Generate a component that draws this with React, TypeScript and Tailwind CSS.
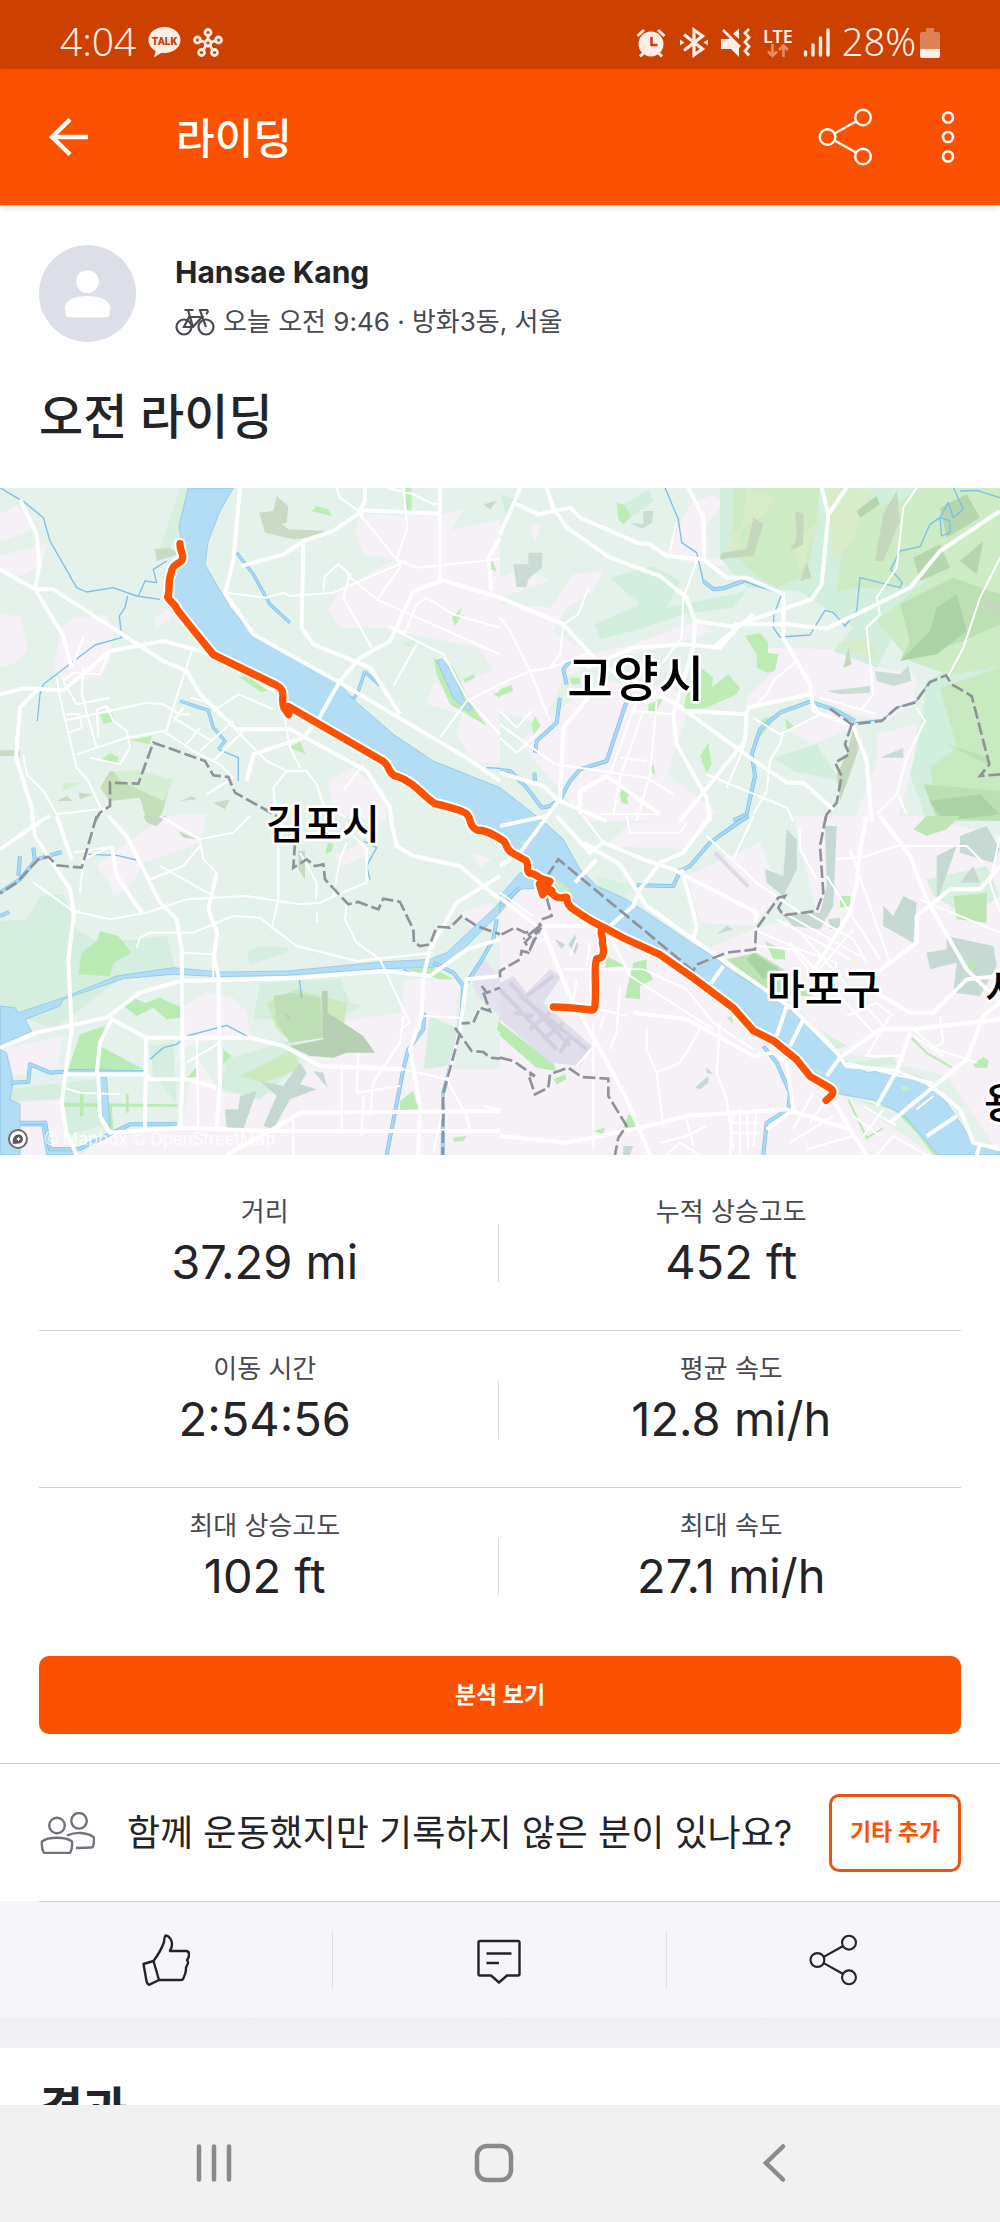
import React from 'react';

interface Stat {
    label: string;
    value: string;
}

const STATS: Stat[][] = [
    [
        { label: '거리', value: '37.29 mi' },
        { label: '누적 상승고도', value: '452 ft' },
    ],
    [
        { label: '이동 시간', value: '2:54:56' },
        { label: '평균 속도', value: '12.8 mi/h' },
    ],
    [
        { label: '최대 상승고도', value: '102 ft' },
        { label: '최대 속도', value: '27.1 mi/h' },
    ],
];

// The map is split in four quadrants, each with its own local coordinates.
const NW = 'translate(0 -21)';
const NE = 'translate(1500 -21)';
const SW = 'translate(0 984)';
const SE = 'translate(1500 984)';

interface Shape {
    at: string;
    fill: string;
    d: string;
}

const LAND: Shape[] = [
    // urban
    { at: NW, fill: '#f6f1f6', d: 'M0 100L50 75 90 100 90 150 0 180zM0 225L140 188 125 255 60 285 0 270zM0 400L60 405 85 500 50 545 0 560zM185 440L225 410 320 402 340 450 330 540 300 590 190 600 160 560zM465 410L520 370 540 385 490 430 465 440z' },
    { at: NW, fill: '#f6f1f6', d: 'M1080 100L1310 105 1390 85 1350 150 1500 115 1500 600 1440 500 1230 460 1150 440 1020 440 985 385 1020 330 1130 265 1190 235 1090 220 1065 150zM1300 610L1400 600 1500 560 1500 850 1420 840 1370 760 1385 700 1280 670zM985 900L1060 860 1150 930 1160 1020 1000 1000z' },
    { at: NW, fill: '#f6f1f6', d: 'M530 1000L620 1000 600 1020 520 1020z' },
    { at: NE, fill: '#f6f1f6', d: 'M0 290L70 260 150 300 0 350zM0 370L150 380 220 280 310 270 280 330 200 380 160 450 270 520 400 490 590 420 640 450 480 500 300 540 190 590 130 730 0 690zM60 780L210 660 300 600 520 620 560 700 500 880 650 990 620 1020 260 1020 130 870zM570 70L640 40 665 70 620 130 620 230 690 240 670 255 540 240 500 220zM90 140L125 125 105 180z' },
    { at: NE, fill: '#f6f1f6', d: 'M800 500L1000 505 1140 560 1250 580 1240 660 1160 720 1060 700 930 640 740 690 740 650 820 570zM870 750L990 690 1060 740 940 790zM1130 760L1250 730 1240 860 1190 1020 1060 1020 1130 850z' },
    { at: SW, fill: '#f6f1f6', d: 'M410 60L500 0 620 0 600 80 430 140 400 200 340 245 330 205 290 150zM1410 110L1475 130 1440 155zM1000 120L1090 80 1110 110 1030 150zM1380 290L1470 260 1500 300 1420 340z' },
    { at: SW, fill: '#f6f1f6', d: 'M555 570L620 530 700 545 740 590 750 665 640 670 560 690 520 760 540 680zM15 700L190 660 170 755 40 780 30 740zM60 860L190 850 220 1017 70 1017 50 910z' },
    { at: SW, fill: '#f6f1f6', d: 'M1000 620L1200 590 1215 490 1380 490 1350 760 1500 760 1500 1017 240 1017 340 950 540 940 590 720 660 830 870 840 920 740z' },
    { at: SE, fill: '#f6f1f6', d: 'M0 240L120 200 330 320 600 480 760 640 900 760 1000 830 1050 850 1300 1017 0 1017z' },
    { at: SE, fill: '#f6f1f6', d: 'M320 90L390 20 640 10 560 100zM560 180L780 80 840 230 760 330 600 320zM880 0L1260 0 1500 60 1500 1017 1340 780 1180 740 1000 700 880 560 620 400 760 340 950 290z' },
    // pale green belts
    { at: NW, fill: '#d7efdf', d: 'M540 20L565 20 540 150 490 230 480 200zM1200 490L1250 470 1240 500z' },
    { at: NE, fill: '#d2eedd', d: 'M370 70L450 25 460 60 370 125zM330 290L460 255 540 300 500 380 740 330 700 380 550 400 400 450 300 475 285 430 420 370zM0 40L60 60 20 110zM820 830L950 790 1020 900 880 870z' },
    { at: NE, fill: '#d2eedd', d: 'M660 20L1500 20 1500 130 1250 330 1130 560 1000 510 1060 440 900 330 740 320 660 230z' },
    { at: NE, fill: '#d2eedd', d: 'M1280 600L1500 480 1500 1020 1280 1020 1230 880 1260 760z' },
    { at: SW, fill: '#d6eedf', d: 'M0 315L80 310 120 240 190 235 230 340 300 380 500 360 530 470 360 490 160 640 60 600 0 570z' },
    { at: SW, fill: '#d6eedf', d: 'M740 410L780 390 865 395 860 410 750 445zM780 500L1020 490 1050 560 1085 570 1010 610 760 610zM680 730L880 670 900 740 780 850 660 820zM450 690L520 680 530 860 460 780zM190 800L290 790 300 930 200 960zM30 820L180 800 190 850 30 855zM1290 600L1380 640 1340 750 1270 760z' },
    { at: SE, fill: '#d8f0e0', d: 'M290 180L400 210 360 250 300 220zM960 640L1040 690 1010 700zM1060 740L1180 720 1190 745 1080 755zM1280 190L1460 150 1500 240 1400 300 1300 240z' },
    // hills
    { at: NE, fill: '#cdebc4', d: 'M700 20L960 20 950 120 920 280 830 320 740 260 700 200zM1040 100L1200 60 1260 20 1500 20 1500 560 1340 580 1230 540 1130 420 1290 290 1180 320 1070 320 1010 330z' },
    { at: NE, fill: '#c9eac1', d: 'M1320 620L1500 560 1500 1020 1320 1020 1290 860 1370 800z' },
    { at: NE, fill: '#d9ecca', d: 'M740 20L830 50 780 110 690 160 690 230 720 190zM880 180L960 120 900 270zM1010 490L1100 470 1140 540 1060 510zM980 20L1120 30 1060 180 1000 240z' },
    { at: NE, fill: '#bcdfb4', d: 'M1200 370L1360 290 1500 340 1500 430 1390 480 1200 540 1230 480zM1270 910L1500 930 1500 1020 1310 1010zM1340 790L1460 850 1470 830z' },
    { at: NE, fill: '#abd3a6', d: 'M1310 380L1370 340 1400 450 1310 520 1200 540 1290 450zM1290 960L1440 940 1500 1000 1330 1020z' },
    { at: NE, fill: '#b5d6ae', d: 'M1240 230L1320 190 1350 260 1260 300zM1320 80L1400 40 1440 110 1340 170zM1380 240L1450 180 1430 280zM1070 90L1130 45 1140 70 1080 110z' },
    { at: NE, fill: '#c5d8bd', d: 'M760 110L790 130 760 225 660 235 665 215 740 205zM885 90L910 100 910 190 870 210 890 170zM1150 100L1190 30 1200 120 1150 240 1125 240zM900 300L920 245 935 290zM1030 560L1045 500 1055 550zM1450 350L1500 370 1500 400 1450 380zM1060 740L1080 790 1050 880 1020 960 1010 880 1040 820z' },
    { at: NE, fill: '#cbdcd4', d: 'M40 250L85 250 85 215 128 215 125 260 85 295 80 318 50 318zM390 125L430 130 430 90 460 90 455 125 425 143zM980 630L1110 615 1110 635 1020 640zM1125 570L1200 580 1225 555 1235 600 1180 615 1130 600zM1140 830L1210 800 1210 830z' },
    { at: NW, fill: '#c9dac5', d: 'M778 95L820 90 830 45 865 75 860 125 845 128 865 145 985 150 980 165 880 175 795 155zM465 205L510 200 540 220 470 240zM1450 70L1490 60 1470 85zM0 808L60 808 60 825 0 825zM170 960L200 945 220 960zM235 935L280 940 240 955zM540 960L575 945 590 955zM640 965L690 955 675 985z' },
    { at: NW, fill: '#c4dfb9', d: 'M300 920L330 870 430 890 515 895 480 1020 440 1020 420 950 330 960z' },
    { at: NW, fill: '#d4efd4', d: 'M190 905L245 905 190 930zM340 870L420 868 520 900 490 960 360 900z' },
    { at: SW, fill: '#cde9be', d: 'M800 560L890 520 1040 560 1030 640 880 680 830 640zM720 780L880 700 900 760 790 800z' },
    { at: SW, fill: '#bfdfb7', d: 'M820 540L880 530 960 545 972 665 870 680 830 620z' },
    { at: SW, fill: '#b7d0b3', d: 'M965 525L983 525 983 590 1090 660 1125 710 1040 710 1000 725 930 720 870 690 970 670zM850 590L870 600 870 615z' },
    { at: SW, fill: '#c6d8d2', d: 'M675 880L715 880 720 840 770 825 730 940 680 940zM780 795L850 810 900 740 920 770 900 805 950 820 870 850 820 940 790 930 830 840zM940 765L970 770 982 815z' },
    { at: SW, fill: '#c6d9c5', d: 'M430 0L500 0 470 30 440 20zM535 45L590 70 550 65zM895 105L915 105 915 190 895 160z' },
    { at: SE, fill: '#c6d9d2', d: 'M860 40L890 70 890 160 850 240 800 200 795 160 850 180zM975 30L1010 30 1000 270 960 340 880 330 840 290 960 290 980 210zM1150 270L1180 300 1210 240 1250 260 1240 380 1150 330zM1280 410L1340 400 1340 360 1480 390 1490 450 1440 540 1360 530 1370 440 1290 460zM1380 60L1460 30 1500 100 1480 140 1380 110zM1310 120L1370 90 1310 260zM1380 200L1420 150 1440 200zM650 355L680 330 700 340zM985 310L1020 305 1020 335 990 340zM165 370L195 385 185 400zM205 385L225 355 235 390 225 415zM585 815L625 780 625 800 600 820zM620 755L640 775 620 770zM370 990L400 990 390 1017 370 1017z' },
    { at: SE, fill: '#bfe5b5', d: 'M1360 240L1460 230 1460 320 1370 310zM1240 40L1280 0 1380 0 1340 40 1280 60z' },
    { at: SE, fill: '#bde3b4', d: 'M680 430L770 410 850 460 940 540 830 540 740 480z' },
    { at: SE, fill: '#a7d4a1', d: 'M760 410L850 470 790 490 740 430z' },
    // parks
    { at: NW, fill: '#bdecb4', d: 'M935 90L950 75 985 85 995 105zM1218 20L1235 20 1235 90 1218 90zM1468 265L1475 235 1490 270zM300 700L335 695 345 720 310 730zM390 778L455 765 450 790zM305 835L330 815 357 830 350 845zM868 800L900 782 917 820zM715 585L750 590 805 630 780 632zM1355 410L1385 380 1380 400 1395 405 1380 410 1365 435zM1390 595L1420 580 1425 590 1395 605zM1300 530L1360 560 1420 680 1460 735 1350 670 1310 580zM1480 640L1500 630 1500 650z' },
    { at: NE, fill: '#bdecb4', d: 'M350 65L370 70 395 105 370 130 355 115zM735 465L780 455 805 485 803 515 835 520 825 570 800 575 770 560 770 520zM560 640L590 550 640 590 635 620 685 580 720 620 710 640 620 680 550 685zM445 670L490 650 470 690 445 690zM600 825L625 785 635 850 620 875zM450 865L460 850 467 885zM360 940L370 915 400 935 380 950 385 970 365 965zM0 625L35 612 40 630 0 645zM785 715L835 700 780 770zM855 710L885 740 860 745zM95 730L105 705 122 735 100 760zM210 590L240 590 240 610 215 610z' },
    { at: SW, fill: '#b9ebb2', d: 'M245 410L290 375 300 345 355 360 395 410 340 440 330 480 235 475 240 440zM372 570L400 545 435 560 480 545 545 575 543 605 500 610 460 575 410 600zM240 655L315 630 300 690 430 760 205 760zM190 860L530 865 535 872 190 872zM670 700L695 720 670 745zM560 785L592 750 590 782zM1200 855L1240 825 1255 880 1200 885zM1360 965L1400 960 1390 975 1362 977zM975 115L985 80 1000 85 995 105zM318 870L335 870 340 940 325 940zM1490 640L1500 600 1500 650zM1220 460L1300 457 1360 490 1320 490zM240 830L250 830 250 900 240 900zM378 835L386 835 386 890 378 890z' },
    { at: SE, fill: '#b9ebb2', d: 'M0 620L130 720 160 740 170 765 110 755 0 660zM400 440L440 430 440 460 460 490 420 510 420 550 375 545zM320 420L375 450 315 455zM795 375L855 405 855 430 820 430zM670 440L740 470 830 560 790 540zM165 200L190 215 190 235zM680 605L695 600 700 625zM1020 240L1050 240 1055 270 1020 275zM160 790L195 775 200 790 170 805zM385 895L410 910 415 935 370 935zM280 945L315 935 310 955zM1420 745L1450 722 1467 735 1460 755 1425 755zM1395 430L1430 445 1420 465zM1050 850L1180 880 1250 950 1300 1017 1330 1017 1200 880z' },
    // airport
    { at: SE, fill: '#e0deea', d: 'M0 500L40 480 80 530 150 460 185 480 130 560 275 690 240 750 150 740 0 610z' },
    { at: SW, fill: '#e4e2ee', d: 'M1410 480L1450 430 1500 480 1500 600 1430 540z' },
];

const RUNWAYS = 'M0 520L170 700M30 500L210 690M60 540L260 700M80 540L160 480M40 590L100 600M130 670L190 620M90 640L150 590M180 710L210 660';

const HAN_RIVER =
    'M565 0L538 110 545 200 505 240 500 320 540 380 640 500 850 590 860 670 1150 830 1180 870 1300 950 1400 990 1500 1044 1520 1074 1580 1100 1620 1164 1700 1224 1820 1314 1980 1384 2090 1464 2220 1574 2260 1624 2360 1664 2440 1754 2500 1814 2550 1824 2620 1836 2710 1880 2815 2001 3000 2001 3000 1984 2920 1964 2880 1904 2840 1844 2770 1774 2690 1744 2600 1754 2510 1704 2420 1604 2320 1524 2200 1454 2140 1404 2080 1369 2000 1314 1880 1234 1790 1194 1740 1144 1690 1054 1630 1000 1500 899 1400 859 1300 819 1180 739 1065 639 1020 589 880 509 760 439 690 359 615 229 625 159 660 69 700 0z';

const WATER: Shape[] = [
    { at: NW, fill: '#b3ddf4', d: 'M1310 540L1325 533 1370 590 1390 655 1418 680 1405 690 1360 650z' },
    { at: SW, fill: '#b3ddf4', d: 'M0 570L45 575 55 590 190 545 350 480 520 455 660 468 860 465 1140 438 1290 430 1340 410 1500 260 1500 290 1360 430 1300 455 1140 458 860 478 660 482 520 475 370 488 190 550 180 570 75 610 95 645 0 690zM0 700L20 710 40 800 30 850 60 865 60 920 140 915 150 1000 230 1005 220 1017 140 1017 125 930 60 930 60 1017 0 1017zM300 785L320 785 330 930 315 930 300 870z' },
    { at: SE, fill: '#b3ddf4', d: 'M0 240L60 170 130 180 130 215 60 220 0 290z' },
];

const CANALS: { at: string; w: number; d: string }[] = [
    { at: NW, w: 10, d: 'M710 215L760 280 810 370 870 425M540 660L625 688 640 740 675 780 655 805M1095 570L1075 630 1060 655M1095 572L1138 612M1020 630L1060 655' },
    { at: NW, w: 4, d: 'M0 20L75 65 130 110 150 180 230 320 260 333 340 320 410 345 480 355M500 240L460 265 470 305 435 300 415 345M383 345L375 380 358 405 365 470 285 492 130 610 120 640 112 720M655 805L715 830 715 900M1460 860L1500 862' },
    { at: NE, w: 12, d: 'M210 540L190 565 200 610M180 650L170 725 110 780 105 815M380 660L320 840 240 865 210 900 180 955 150 975 125 980 80 920 30 870 0 868M610 300L640 325 670 322 730 300M700 1018L740 1000 765 885 755 820 780 745 840 695 930 662 1000 685 1065 720M103 875L105 900' },
    { at: NE, w: 4, d: 'M495 20L535 115 545 185 590 215 610 300M730 300L845 340 822 400 820 440 840 468 930 462 975 388 1000 395 1035 435 1070 390 1080 290 1200 320 1207 305 1172 265 1200 210 1260 197 1290 130 1320 110 1345 65 1360 110 1390 85 1360 20M1320 110L1325 165 1350 155 1350 120 1320 110M1065 725L1150 715 1190 680 1250 660 1290 600M1380 30L1430 28 1500 50' },
    { at: SW, w: 12, d: 'M0 230L60 190 110 130 185 108M60 120L55 180M100 95L105 140M0 300L28 288M1300 440L1360 470 1390 510 1385 600 1375 660 1330 830 1328 1017M1400 500L1440 440 1480 370 1490 310M30 800L85 798 90 745 150 770 220 765 430 768M60 920L135 920 150 1000 235 1000 390 925 530 925M1160 1017L1210 760 1225 700 1270 640 1272 590' },
    { at: SW, w: 4, d: 'M265 115L350 118 410 132M450 730L490 695 530 685 560 660 680 628 750 665M898 490L905 545M1090 75L1130 95 1100 150 1110 190M1210 460L1270 485' },
    { at: SE, w: 12, d: 'M745 0L700 30 630 80 570 150 540 165 520 210 410 208M790 690L830 740 870 830 865 880 800 920 790 1017M0 270L60 215' },
];

const MAJOR_ROADS: { at: string; d: string }[] = [
    { at: NW, d: 'M720 20L700 240 675 335 760 460 1020 605 1400 830 1500 900M0 265L105 325 160 325 490 540 560 570 600 640 710 745 870 745 1100 870 1170 980 1175 1020M105 325L190 465 215 560M0 640L70 622 190 628 330 510 490 480 640 520 860 650M60 55L110 160 118 250 105 325M110 628L60 680 48 830 95 980 100 1020M725 255L850 220 910 180 1000 150 1090 88 1320 98M1095 20L1095 60 1080 90M910 180L905 440 940 490 1110 560 1200 700M1320 20L1320 300 1240 330 1170 480 1080 530 1020 600 955 715 910 770 760 820 740 900M1240 330L1330 298 1500 350M1500 170L1465 230 1475 330' },
    { at: NE, d: 'M140 20L160 80 200 140 330 230 480 285 560 350 585 420 580 500 520 700 530 790 620 950 630 1020M60 20L40 70 0 160M40 65L115 100 210 80 240 110 410 185 450 190 500 225 610 235 680 290 740 290 850 340 850 470 930 610 940 690 1060 735 1100 840 1115 1020M565 20L610 110 612 235M0 350L190 430 300 550 430 620 530 670 750 830 860 905 910 905 1000 985M585 420L700 437 860 380 935 355 965 310 985 100 965 20M1040 20L985 100M640 500L760 400M700 430L860 430 980 443 1080 395 1230 320 1320 210 1500 90M260 560L400 500 550 490 660 500 720 430M560 690L740 700M740 680L930 640M740 690L735 780 540 1020M265 650L190 740 180 960M0 875L130 915 175 960 130 1020M180 960L320 1020M240 1000L240 930 320 885 480 1000' },
    { at: SW, d: 'M95 0L105 60 210 220 222 290 205 430 215 640 185 860 200 950 230 1017M150 0L130 10 0 100M170 0L215 130M325 0L380 60 480 260 530 310 545 400 548 780 540 940M335 90L350 180 425 290M650 170L625 280 652 350 642 420 655 480 660 800 650 940M0 695L110 650 320 605 420 530 540 495 900 485 1150 465 1290 480 1400 400 1500 370M1290 400L1270 480 1265 600 1230 700 1260 870 1255 1017M1290 400L1370 260 1500 180M1170 0L1190 90 1240 120 1380 150 1450 210 1500 250M190 775L440 775 450 790 560 790 650 815M438 665L435 940M438 665L750 665 850 690 960 750 1210 760M290 775L300 680 335 610 440 665M295 780L300 900 330 950 540 935 800 945 1500 945M680 1017L800 950 900 890 1500 885M1500 480L1400 490 1380 640 1340 800' },
    { at: SE, d: 'M0 30L140 0M0 150L60 110 135 10M0 245L110 330 300 330M130 340L200 520 300 700 380 850 450 1017M170 0L270 110 310 80 430 130 520 160 770 290 765 320M225 200L290 130M330 330L400 270 420 220 480 140 550 110 630 0M250 80L360 145 440 270 650 420 880 580 1010 710 1040 750 1190 765 1280 800 1380 880 1420 980 1500 1000M545 160L570 250 590 330 580 370M400 590L560 610 760 720 820 710 860 740 880 880 800 940M0 960L200 980 400 940 560 900 860 880 1050 940M830 660L860 570M870 690L910 610M980 780L1020 725 1140 640 1240 640 1500 610M1140 0L1230 120 1280 250 1400 460 1500 560M1500 150L1440 220 1350 220 1250 300 1250 380 1130 470 1050 480M1130 530L1230 590 1300 590 1400 490 1500 480M1130 870L1190 765 1230 650M1170 920L1400 730 1450 600 1500 560M1280 960L1370 900M1430 1017L1440 985M1000 850L1050 940 1100 1017M1100 0L1080 100 1070 200 1050 290 930 480M620 520L670 450' },
];

const MINOR_ROADS: { at: string; d: string }[] = [
    { at: NW, d: 'M675 335L800 350 850 335 870 345 1000 335 1220 240M970 330L975 285 1015 250 1050 280 1030 350 1115 500M1040 280L1130 355 1500 520M1080 100L1190 235 1250 260 1500 235M1210 20L1222 140 1190 235 1200 260 1130 360M1500 440L1360 400 1280 350 1250 370 1215 455 1165 435M1170 440L1330 520 1400 650 1500 760M1250 490L1180 615M1320 770L1400 660 1500 610M170 590L180 650 230 860 265 900 310 1000M190 600L230 670 330 650M250 560L245 640 290 800M200 700L240 700 245 740 205 755M230 820L380 770 490 750 580 810 660 850 700 890M190 720L440 665 490 670 540 700 570 700M575 510L510 710 500 750M520 710L635 780M550 680L520 720M570 650L610 660M560 790L600 740M600 810L700 720M640 840L740 740M270 830L360 850 390 800 380 750 340 720 320 675 290 685 295 770M640 690L715 640 820 685M710 750L800 840 860 870 920 870 950 910 970 970 1040 1010M850 690L870 800 900 860M860 870L820 920 825 980M1090 850L1030 930M70 820L80 880 130 930 170 1000 330 980M700 890L620 940M1010 20L1020 50 1090 100M1160 20L1240 40 1300 70 1320 65M215 560L250 470M330 510L300 580 220 575 190 600' },
    { at: NE, d: 'M590 240L550 350 545 470 440 610M530 120L510 210M265 320L235 400 190 430 180 520 150 560 90 570 0 610M150 560L270 515M0 410L30 450 90 570 150 720M0 690L50 740 95 690M0 730L165 850 440 890 520 940M0 770L50 815 120 750M410 660L330 880M430 690L360 890 340 1000M470 660L450 880 410 1020M360 830L440 840M400 690L520 700M890 540L820 600 800 640 770 670 740 690M1250 20L1210 80 1190 260 1130 350 1140 400 1100 440 1120 640 1080 690M1500 230L1440 350 1390 500 1345 585M850 750L840 790 810 840 800 930 760 1000M620 880L860 980 880 1020M735 790L680 920M930 650L960 700 840 760 760 710M1250 680L1275 720 1220 830 1190 940 1130 1000M1190 930L1220 1000M960 650L1130 700M480 1000L300 1000' },
    { at: SW, d: 'M100 200L220 285 330 310 440 290 560 250 740 240 900 265 960 260 1050 220 1100 200 1100 100 1060 60M480 0L600 70 700 50 750 0M600 70L610 130 650 170M450 190L550 150 600 90M410 395L420 365 450 350 580 350 700 300 780 305 890 390 1070 435 1300 410M1040 260L1035 310 1070 380 1140 430 1200 560 1230 620M1000 240L1020 130 1040 80M835 0L835 250 815 340M900 110L950 200 948 250M950 290L952 320M550 410L640 415M240 230L250 130 335 90M220 110L335 92M480 150L640 240M190 815L240 830 360 835M590 670L595 940M640 500L640 420M880 900L880 1017M1210 600L1200 680 1120 800 1110 900M1075 710L1070 830 1200 810M1025 760L1025 940M1090 840L1085 960M1210 760L1340 790 1400 900 1410 945M1340 830L1300 1010M1270 600L1380 605M1230 620L1200 640M1450 870L1500 880M560 740L660 680' },
    { at: SE, d: 'M0 230L100 300M190 460L430 460 560 520 640 620 760 700M320 340L390 480 640 640M230 490L220 560 380 600M440 640L440 700 470 770 540 740 600 640M310 600L300 640M360 510L350 650 330 700M660 620L650 770 680 850 700 1000M470 770L490 930M700 130L760 0M620 60L770 200 900 290M380 0L390 50 540 50 560 20M250 0L310 80M760 340L900 400 1010 440 1000 500M830 310L1050 430M850 290L1080 420M920 290L1060 370 1100 440M870 380L1130 660M900 350L1160 640M770 390L880 400 940 480 1060 340M1010 130L1100 120 1190 90 1400 90 1450 140M900 40L900 100 950 190M980 180L1050 290 1140 430M1050 100L1170 440M1260 250L1500 350M1500 60L1470 200 1500 290M1180 600L1130 560 1040 600M1170 600L1100 720 1200 720M1240 640L1310 700 1430 740M1240 660L1330 720M1040 740L1200 780 1300 800M1320 600L1330 680 1290 700M700 880L690 1017M720 880L720 1017M740 890L745 1000M770 880L760 990M700 920L780 920M690 950L780 950M480 980L560 960 620 930M500 1017L540 980 600 1017M1090 960L1150 880M1060 900L1140 960M1090 870L1190 930M930 920L980 850M880 940L940 830M920 1000L1060 960M870 980L1000 900M1130 1017L1180 960 1280 1017M1300 840L1250 880M140 360L120 380M270 380L260 450M210 420L230 370M280 620L280 1000M230 750L290 680M560 910L580 990' },
];

const BORDERS: { at: string; d: string }[] = [
    { at: NW, d: 'M285 1020L300 995 330 975 330 905 415 908 460 785 615 840 640 883 685 888 705 935 830 1005' },
    { at: NE, d: 'M990 683L1055 730 1145 720 1190 680 1245 665 1290 603 1338 583 1355 610 1415 645 1468 850 1440 885 1500 880M1055 730L1035 790 1048 820 1005 845 1025 885 1010 965 980 1000 975 1020' },
    { at: SW, d: 'M290 0L245 155 170 148 145 122 115 130 50 200 0 232M885 80L880 155 920 130 945 150 970 145 975 190 1045 265 1075 258 1135 280 1150 248 1200 258 1240 340 1242 380 1260 390 1290 385 1310 332 1350 335 1385 300 1430 330 1500 355M1445 510L1460 530 1500 515M1450 530L1470 585 1440 575 1420 620 1385 622M1365 635L1415 705 1450 708 1470 725 1500 728M1380 650L1330 830 1328 1017' },
    { at: SE, d: 'M978 0L960 90 970 230 950 285 850 298 835 275 855 240 835 245 768 340 765 400 680 410 585 448 580 470M580 465L175 130 145 175M140 245L155 300 125 310 90 400 75 380 125 325 70 370M5 355L45 335 75 350 120 340 85 410 65 405 60 430 0 465 0 490M0 725L40 735 105 780 85 775 105 835 145 815 150 775 205 755 245 783 325 788 325 840 380 930 355 965 345 1017' },
];

const ROUTE =
    'M540 167C538 190 556 200 545 218C535 228 515 232 515 250C500 290 512 310 503 327C508 342 522 340 535 370L575 420 640 500 830 592C862 610 840 630 852 660L866 680 865 655 1150 820C1170 835 1165 860 1190 865C1240 880 1270 925 1305 947C1340 955 1385 965 1400 978C1415 990 1405 1015 1430 1026C1460 1025 1490 1045 1512 1060C1520 1070 1520 1085 1535 1094L1578 1118C1590 1135 1575 1150 1590 1156C1605 1155 1610 1165 1625 1172L1650 1180 1635 1195 1655 1208 1630 1212 1618 1188 1628 1220 1645 1200 1640 1180M1640 1200L1660 1220C1680 1238 1690 1225 1700 1228C1700 1250 1710 1258 1720 1264C1750 1285 1780 1305 1815 1320L1870 1350 1980 1400 2080 1470 2200 1560 2260 1628 2320 1658 2390 1715 2430 1765 2490 1800C2505 1810 2500 1820 2478 1837M1808 1318C1795 1335 1812 1345 1807 1365C1815 1395 1810 1412 1790 1412C1780 1430 1790 1500 1785 1550Q1785 1567 1775 1566L1700 1558 1660 1557';

function RideMap() {
    return (
        <div className="relative">
            <svg viewBox="0 0 3000 2001" className="block w-full h-auto" role="img" aria-label="오전 라이딩">
                <rect width="3000" height="2001" fill="#e5f2ec" />
                {LAND.map((s, i) => (
                    <path key={i} d={s.d} fill={s.fill} transform={s.at} />
                ))}
                <path d={RUNWAYS} transform={SE} stroke="#d2cfe0" strokeWidth="12" fill="none" />
                <path d="M645 110L745 212" transform={SE} stroke="#dfdcea" strokeWidth="12" />
                {WATER.map((s, i) => (
                    <path key={i} d={s.d} fill={s.fill} stroke="#82c0e6" strokeWidth="2" transform={s.at} />
                ))}
                {CANALS.map((c, i) => (
                    <g key={i} transform={c.at} fill="none" strokeLinejoin="round">
                        <path d={c.d} stroke="#7dbfe8" strokeWidth={c.w} />
                        {c.w > 4 && <path d={c.d} stroke="#a9d8f3" strokeWidth={c.w - 4} />}
                    </g>
                ))}
                <path d={HAN_RIVER} fill="#b3ddf4" stroke="#82c0e6" strokeWidth="2" />
                <path d="M1545 1050l30 14-8 8zM1660 1170l45 30 15 30-40-10zM2440 1740l30 12-8 6zM2700 1790l30 10-10 10-16-4z" fill="#c9ecc8" />
                <path d="M2545 1835L2600 1950L2650 1920M2735 1650L2780 1695L2855 1738" stroke="#b9ebb2" strokeWidth="6" fill="none" />
                {MINOR_ROADS.map((r, i) => (
                    <path key={i} d={r.d} transform={r.at} stroke="#fff" strokeWidth="6" fill="none" strokeLinejoin="round" />
                ))}
                {MAJOR_ROADS.map((r, i) => (
                    <path key={i} d={r.d} transform={r.at} stroke="#fff" strokeWidth="12" fill="none" strokeLinejoin="round" />
                ))}
                {BORDERS.map((b, i) => (
                    <path key={i} d={b.d} transform={b.at} stroke="#8f919b" strokeWidth="8" strokeDasharray="38 12" fill="none" />
                ))}
                <g fill="none" strokeLinecap="round" strokeLinejoin="round">
                    <path d={ROUTE} stroke="#fff" strokeWidth="34" />
                    <path d={ROUTE} stroke="#fc5200" strokeWidth="22" />
                </g>
                <g
                    className="font-['Noto_Sans_CJK_KR',sans-serif] font-medium"
                    fill="#000"
                    stroke="#fff"
                    strokeWidth="16"
                    strokeLinejoin="round"
                    style={{ paintOrder: 'stroke' }}
                >
                    <text x="1702" y="628" fontSize="149">고양시</text>
                    <text x="798" y="1052" fontSize="124">김포시</text>
                    <text x="2300" y="1548" fontSize="124">마포구</text>
                    <text x="2955" y="1548" fontSize="124">서</text>
                    <text x="2952" y="1890" fontSize="124">용</text>
                </g>
            </svg>
            <div className="absolute left-2 bottom-1 flex items-center gap-4 text-white/80 text-[18px] leading-6 font-['Roboto',sans-serif]">
                <svg viewBox="0 0 20 20" className="size-5">
                    <circle cx="10" cy="10" r="9" fill="#fff" stroke="#6b6b70" strokeWidth="2" />
                    <path d="M5 15c-1-5 1-9.500 5.500-9.500a4.500 4.500 0 0 1 0 9c-2 0-3.500.3-5.500.500z" fill="#56565c" />
                    <path d="M10.500 7.500l.8 1.700 1.700.8-1.700.8-.8 1.700-.8-1.700-1.700-.8 1.700-.8z" fill="#fff" />
                </svg>
                <span>© Mapbox © OpenStreetMap</span>
            </div>
        </div>
    );
}

function ShareIcon({ className }: { className: string }) {
    return (
        <svg viewBox="0 0 54 58" className={className} fill="none" stroke="currentColor" strokeWidth="2.400">
            <circle cx="9.500" cy="29" r="7.800" />
            <circle cx="45" cy="9.500" r="7.800" />
            <circle cx="45" cy="48.500" r="7.800" />
            <path d="M16.500 25.500L38 13.500M16.500 32.500L38 44.500" />
        </svg>
    );
}

function StatusBar() {
    return (
        <div className="flex items-center justify-between h-[69px] pl-[60px] pr-[60px] pt-4 bg-[#cc4100] text-[#fdeee7] font-['Noto_Sans',sans-serif]">
            <div className="flex items-center gap-3">
                <span className="text-[39px] leading-9 pb-1 font-light">4:04</span>
                <svg viewBox="0 0 33 31" className="w-[33px] h-[31px]">
                    <path d="M16.500 0C7.500 0 .5 5.800.5 13c0 4.700 3 8.800 7.300 11.100L6 30.500l7.500-4.800c1 .2 2 .3 3 .3 9 0 16-5.800 16-13S25.500 0 16.500 0z" fill="currentColor" />
                    <text x="16.500" y="17.500" textAnchor="middle" fontSize="10.500" className="font-['Roboto',sans-serif] font-black" fill="#cc4100">TALK</text>
                </svg>
                <svg viewBox="0 0 30 30" className="size-[30px]" fill="none" stroke="currentColor" strokeWidth="2.800">
                    <circle cx="15" cy="15" r="3" />
                    <circle cx="15" cy="4.500" r="3" />
                    <circle cx="4.500" cy="12" r="3" />
                    <circle cx="25.500" cy="12" r="3" />
                    <circle cx="8.500" cy="24.500" r="3" />
                    <circle cx="21.500" cy="24.500" r="3" />
                    <path d="M15 7.500V12M7.500 13l4.500 1M22.500 13L18 14M10.300 22l2.700-4.500M19.700 22L17 17.500" />
                </svg>
            </div>
            <div className="flex items-center">
                <svg viewBox="0 0 30 30" className="size-[30px] mr-[14px]">
                    <circle cx="15" cy="16" r="12.500" fill="currentColor" />
                    <path d="M1.500 8L8 2M28.500 8L22 2M4 28.500l4-4M26 28.500l-4-4" stroke="currentColor" strokeWidth="3" />
                    <path d="M15.500 9v8h6" stroke="#cc4100" strokeWidth="2.500" fill="none" />
                </svg>
                <svg viewBox="0 0 28 31" className="w-7 h-[31px] mr-[13px]" fill="none" stroke="currentColor" strokeWidth="3.200">
                    <path d="M4 7.500L22.500 22 14 28V3l8.500 6L4 23.500" />
                    <path d="M0 12.500l4.500 3L0 18.500zM28 12.500l-4.500 3 4.500 3z" fill="currentColor" stroke="none" />
                </svg>
                <svg viewBox="0 0 30 30" className="size-[30px] mr-3" fill="none" stroke="currentColor" strokeWidth="3">
                    <path d="M0 11h7l3.500-.5L18 18v11l-8-8H0z M12 6l6-5.500V11z" fill="currentColor" stroke="none" />
                    <path d="M2 2l17 17" strokeWidth="2.500" />
                    <path d="M28 1l-4 4 4 4.500-4 4.500 4 4.500-4 4.500 4 4.500" strokeWidth="2.800" />
                </svg>
                <div className="flex flex-col items-center mr-[10px]">
                    <span className="text-[18px] leading-4 font-semibold">LTE</span>
                    <svg viewBox="0 0 22 14" className="w-[22px] h-[14px]" fill="none" stroke="#e58d66" strokeWidth="2.600">
                        <path d="M5.500 0v12M1 7.500L5.500 12 10 7.500M16.500 13V2M12 6l4.500-4.500L21 6" />
                    </svg>
                </div>
                <svg viewBox="0 0 27 29" className="w-[27px] h-[29px] mr-3" stroke="currentColor" strokeWidth="3.400" strokeLinecap="round">
                    <path d="M2.500 24v3M10 17v10M17.500 10v17M25 2v25" />
                </svg>
                <span className="text-[38px] leading-9 pb-1 font-light mr-1">28%</span>
                <svg viewBox="0 0 20 30" className="w-5 h-[30px]">
                    <path d="M6 0h8v4h4a2 2 0 0 1 2 2v16H0V6a2 2 0 0 1 2-2h4z" fill="#de8257" />
                    <path d="M0 21h20v7a2 2 0 0 1-2 2H2a2 2 0 0 1-2-2z" fill="currentColor" />
                </svg>
            </div>
        </div>
    );
}

function AppBar() {
    return (
        <header className="relative flex items-center h-[136px] pl-12 pr-[44px] bg-[#fc5200] text-white shadow-md">
            <button type="button" aria-label="뒤로" className="mr-[88px]">
                <svg viewBox="0 0 40 40" className="size-10" fill="none" stroke="currentColor" strokeWidth="4.400">
                    <path d="M40 20H5M22 2.500L4 20l18 17.500" />
                </svg>
            </button>
            <h1 className="flex-1 pt-1 text-[42px] leading-[48px] font-medium">라이딩</h1>
            <button type="button" aria-label="공유" className="mr-[68px]">
                <ShareIcon className="w-[54px] h-[58px]" />
            </button>
            <button type="button" aria-label="더보기">
                <svg viewBox="0 0 16 54" className="w-4 h-[54px]" fill="none" stroke="currentColor" strokeWidth="2.600">
                    <circle cx="8" cy="7.500" r="5" />
                    <circle cx="8" cy="27" r="5" />
                    <circle cx="8" cy="46.500" r="5" />
                </svg>
            </button>
        </header>
    );
}

const App: React.FC = () => {
    return (
        <div className="flex flex-col h-screen bg-white text-[#242428] font-['Inter','Noto_Sans_CJK_KR',sans-serif]">
            <StatusBar />
            <AppBar />

            <main className="flex-1 overflow-hidden">
                <section className="px-[39px] pt-[39px]">
                    <div className="flex items-center gap-[39px]">
                        <svg viewBox="0 0 98 98" className="size-[97px]">
                            <circle cx="49" cy="49" r="49" fill="#dcdfe8" />
                            <circle cx="49" cy="37" r="11.500" fill="#fff" />
                            <path d="M26 64c0-8 10-12.500 23-12.500S72 56 72 64l-1 7q-.5 2-2.500 2h-39q-2 0-2.500-2z" fill="#fff" />
                        </svg>
                        <div className="pt-2">
                            <p className="text-[30px] leading-10 font-bold">Hansae Kang</p>
                            <div className="flex items-center gap-2 mt-[10px] text-[26px] leading-10 text-[#494950]">
                                <svg viewBox="0 0 40 28" className="w-10 h-7" fill="none" stroke="currentColor" strokeWidth="2.200">
                                    <circle cx="9" cy="19" r="7.500" />
                                    <circle cx="31" cy="19" r="7.500" />
                                    <path d="M9 19h9l9-10H14zM18 19L13 2M9.500 2h9M31 19L25 2h7q2 2-1 4" />
                                </svg>
                                <p>오늘 오전 9:46 · 방화3동, 서울</p>
                            </div>
                        </div>
                    </div>
                    <h2 className="mt-[43px] mb-[39px] text-[48px] leading-[64px] font-medium">오전 라이딩</h2>
                </section>

                <RideMap />

                <section className="pt-[19px]">
                    {STATS.map((row, i) => (
                        <div key={i}>
                            {i > 0 && <hr className="mx-[39px] border-[#d4d4d8]" />}
                            <div className="grid grid-cols-[1fr_1px_1fr] ml-8 mr-9 pt-[22px] pb-10 text-center">
                                <dl>
                                    <dt className="text-[26px] leading-8 text-[#494950]">{row[0].label}</dt>
                                    <dd className="mt-[6px] text-[47px] leading-14">{row[0].value}</dd>
                                </dl>
                                <div className="mt-7 h-[58px] bg-[#dcdce0]" />
                                <dl>
                                    <dt className="text-[26px] leading-8 text-[#494950]">{row[1].label}</dt>
                                    <dd className="mt-[6px] text-[47px] leading-14">{row[1].value}</dd>
                                </dl>
                            </div>
                        </div>
                    ))}
                    <div className="px-[39px] pt-3 pb-[29px]">
                        <button type="button" className="w-full h-[78px] rounded-[10px] bg-[#fc5200] text-white text-[23px] font-bold">
                            분석 보기
                        </button>
                    </div>
                </section>

                <section className="flex items-center h-[138px] px-[39px] border-t border-[#cfcfd4]">
                    <svg viewBox="0 0 56 42" className="w-14 h-[42px] shrink-0 text-[#72727c]" fill="none" stroke="currentColor" strokeWidth="2.400">
                        <circle cx="18" cy="13.500" r="7.800" />
                        <circle cx="40" cy="8.800" r="7.800" />
                        <path d="M3 29.500c6-5 24-5 30 0 .5 4-.3 8-1.500 10.500q-.5 1-1.500 1H6q-1 0-1.500-1C3 37 2.500 33 3 29.500z" />
                        <path d="M28 23.500c8-3.500 20-4 27 2 .3 3-.2 6-1 9q-.4 1-1.500 1L37 36" />
                    </svg>
                    <p className="flex-1 ml-8 text-[36px] leading-[48px]">함께 운동했지만 기록하지 않은 분이 있나요?</p>
                    <button type="button" className="shrink-0 w-[132px] h-[78px] rounded-[10px] border-3 border-[#e85412] text-[#fc5200] text-[23px] font-bold">
                        기타 추가
                    </button>
                </section>
                <div className="bg-[#f6f6f9]">
                    <hr className="ml-[39px] border-[#cfcfd6]" />
                </div>

                <div className="grid grid-cols-3 py-[29px] divide-x divide-[#dfdfe6] bg-[#f6f6f9]">
                    <button type="button" aria-label="좋아요" className="flex items-center justify-center h-[58px]">
                        <svg viewBox="0 0 48 52" className="w-12 h-[52px]" fill="none" stroke="currentColor" strokeWidth="2.400" strokeLinejoin="round">
                            <path d="M1.500 30L11.500 27 17 46 7 50.800Q5 50 4.500 47z" />
                            <path d="M11.500 27C16 21 20 14 22 8q0-4 1.500-6.500C27 1.500 30 6 30 9.500Q30 14 28 17H44q3 0 3 3.500Q47 24 45 26q2 2 0 5.500-1.500 2-1 4.500-.5 4-2.500 8-.5 2-2.500 2H17" />
                        </svg>
                    </button>
                    <button type="button" aria-label="댓글" className="flex items-center justify-center h-[58px]">
                        <svg viewBox="0 0 44 46" className="w-11 h-[46px] mt-1" fill="none" stroke="currentColor" strokeWidth="2.400" strokeLinejoin="round">
                            <path d="M3 2h38q1.500 0 1.500 1.500V35q0 1.500-1.500 1.500H30L22 43.500 14 36.500H3Q1.500 36.500 1.500 35V3.500Q1.500 2 3 2zM9.500 14.500h25M9.500 24H22" />
                        </svg>
                    </button>
                    <button type="button" aria-label="공유" className="flex items-center justify-center h-[58px]">
                        <ShareIcon className="w-12 h-[52px]" />
                    </button>
                </div>
                <div className="h-[30px] bg-linear-to-b from-[#eeeef3] to-[#f3f3f7]" />

                <section className="px-[39px] pt-[30px]">
                    <h2 className="text-[48px] leading-[64px] font-bold">결과</h2>
                </section>
            </main>

            <nav className="shrink-0 grid grid-cols-3 h-[117px] pl-[74px] pr-[86px] pb-[2px] bg-[#f1f1f1] text-[#8a8a8a]">
                <button type="button" aria-label="최근 앱" className="flex items-center justify-center">
                    <svg viewBox="0 0 40 40" className="size-10" stroke="currentColor" strokeWidth="4.500" strokeLinecap="round">
                        <path d="M5 3.500v33M20 3.500v33M35 3.500v33" />
                    </svg>
                </button>
                <button type="button" aria-label="홈" className="flex items-center justify-center">
                    <svg viewBox="0 0 40 40" className="size-10" fill="none" stroke="currentColor" strokeWidth="4.500">
                        <rect x="3" y="3" width="34" height="34" rx="10" />
                    </svg>
                </button>
                <button type="button" aria-label="뒤로 가기" className="flex items-center justify-center">
                    <svg viewBox="0 0 40 40" className="size-10" fill="none" stroke="currentColor" strokeWidth="4.500" strokeLinecap="round">
                        <path d="M29 3.500L12 20l17 16.500" />
                    </svg>
                </button>
            </nav>
        </div>
    );
};

export default App;
